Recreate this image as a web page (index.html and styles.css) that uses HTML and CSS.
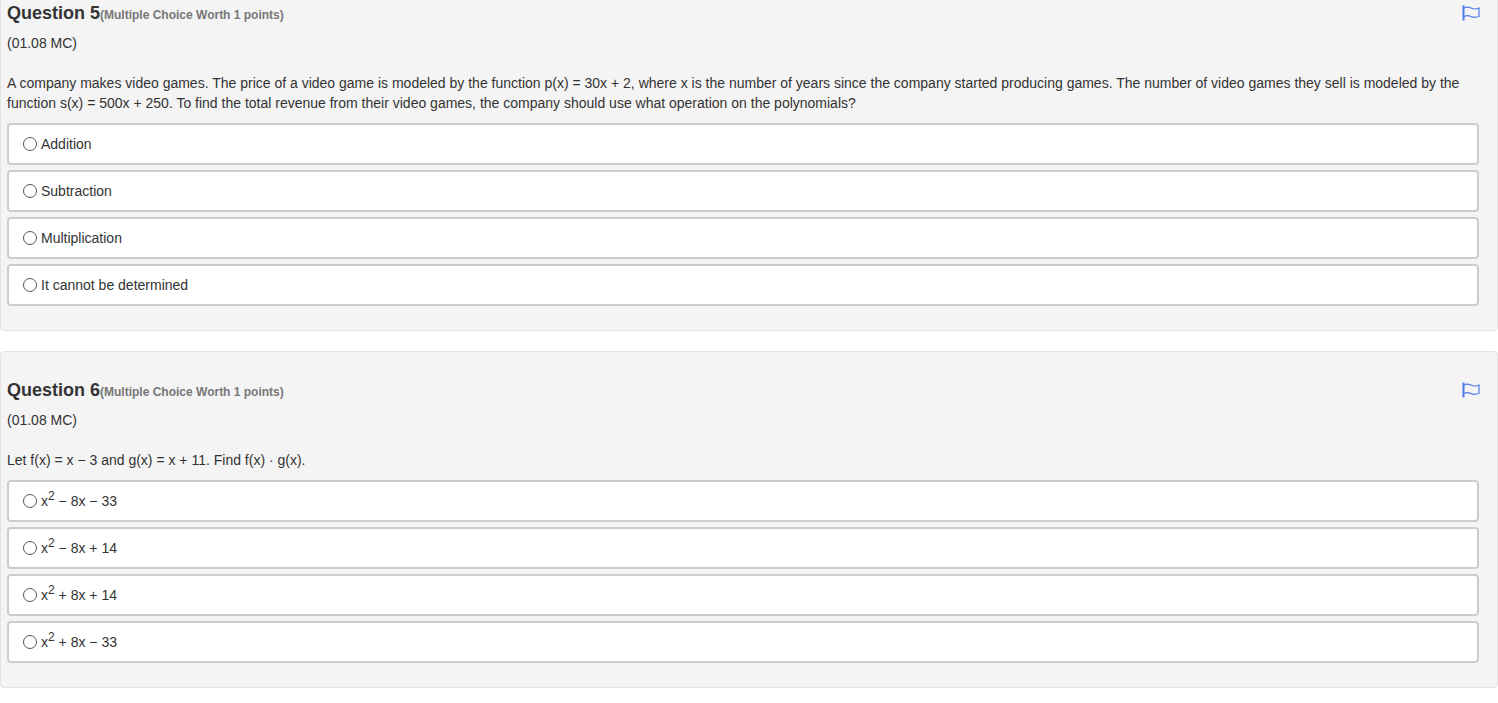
FILE: index.html
```html
<!DOCTYPE html>
<html lang="en">
<head>
  <meta charset="UTF-8">
  <meta name="viewport" content="width=device-width, initial-scale=1.0">
  <title>Quiz</title>
  <link rel="stylesheet" href="styles.css">
</head>
<body>

  <div class="quiz">

    <div class="question">
      <div class="question-head">
        <h2 class="question-title">Question 5<span class="question-worth">(Multiple Choice Worth 1 points)</span></h2>
        <svg class="flag" viewBox="0 0 18 16" width="18" height="16" aria-hidden="true">
          <path class="flag-pole" d="M1.5 0.5V15.5"/>
          <path class="flag-cloth" d="M2 3C5 1.5 7 2 9 3S14 4.5 17 3V11.5C14 12.5 11 12.5 9 11.5S5 10 2 11.5"/>
        </svg>
      </div>
      <p class="question-code">(01.08 MC)</p>
      <p class="question-text">A company makes video games. The price of a video game is modeled by the function p(x) = 30x + 2, where x is the number of years since the company started producing games. The number of video games they sell is modeled by the function s(x) = 500x + 250. To find the total revenue from their video games, the company should use what operation on the polynomials?</p>
      <div class="options">
        <label class="option"><span class="radio"></span><span>Addition</span></label>
        <label class="option"><span class="radio"></span><span>Subtraction</span></label>
        <label class="option"><span class="radio"></span><span>Multiplication</span></label>
        <label class="option"><span class="radio"></span><span>It cannot be determined</span></label>
      </div>
    </div>

    <div class="question">
      <div class="question-head">
        <h2 class="question-title">Question 6<span class="question-worth">(Multiple Choice Worth 1 points)</span></h2>
        <svg class="flag" viewBox="0 0 18 16" width="18" height="16" aria-hidden="true">
          <path class="flag-pole" d="M1.5 0.5V15.5"/>
          <path class="flag-cloth" d="M2 3C5 1.5 7 2 9 3S14 4.5 17 3V11.5C14 12.5 11 12.5 9 11.5S5 10 2 11.5"/>
        </svg>
      </div>
      <p class="question-code">(01.08 MC)</p>
      <p class="question-text">Let f(x) = x − 3 and g(x) = x + 11. Find f(x) · g(x).</p>
      <div class="options">
        <label class="option"><span class="radio"></span><span>x<sup>2</sup> − 8x − 33</span></label>
        <label class="option"><span class="radio"></span><span>x<sup>2</sup> − 8x + 14</span></label>
        <label class="option"><span class="radio"></span><span>x<sup>2</sup> + 8x + 14</span></label>
        <label class="option"><span class="radio"></span><span>x<sup>2</sup> + 8x − 33</span></label>
      </div>
    </div>

  </div>

</body>
</html>
```

FILE: styles.css
```css
* {
  margin: 0;
  padding: 0;
  box-sizing: border-box;
}

body {
  background: #fff;
  font-family: 'Liberation Sans', Arial, sans-serif;
  font-size: 14px;
  color: #333;
  height: 703px;
  overflow: hidden;
}

/* the page is scrolled, first card starts above the window */
.quiz {
  display: flex;
  flex-direction: column;
  gap: 20px;
  margin-top: -26px;
}

.question {
  background: #f4f4f4;
  border: 1px solid #e3e3e3;
  border-radius: 4px;
  padding: 26px 18px 24px 6px;
}

.question-head {
  display: flex;
  justify-content: space-between;
  align-items: center;
  height: 24px;
}

.question-title {
  font-size: 18px;
  font-weight: bold;
  color: #333;
}

.question-worth {
  font-size: 12px;
  color: #777;
}

.flag {
  margin-right: -1px;
}

.flag-pole {
  fill: none;
  stroke: #4f7ae8;
  stroke-width: 2;
}

.flag-cloth {
  fill: none;
  stroke: #4f7ae8;
  stroke-width: 1.2;
}

.question-code {
  margin-top: 8px;
  line-height: 20px;
}

.question-text {
  margin-top: 20px;
  line-height: 20px;
}

.options {
  display: flex;
  flex-direction: column;
  gap: 5px;
  margin-top: 10px;
  margin-right: 0;
}

.option {
  display: flex;
  align-items: center;
  height: 42px;
  background: #fff;
  border: 2px solid #ccc;
  border-radius: 4px;
  padding-left: 14px;
}

.radio {
  width: 14px;
  height: 14px;
  border: 1px solid #555;
  border-radius: 50%;
  margin-right: 4px;
  flex-shrink: 0;
}

sup {
  font-size: 12px;
  line-height: 0;
}
```
